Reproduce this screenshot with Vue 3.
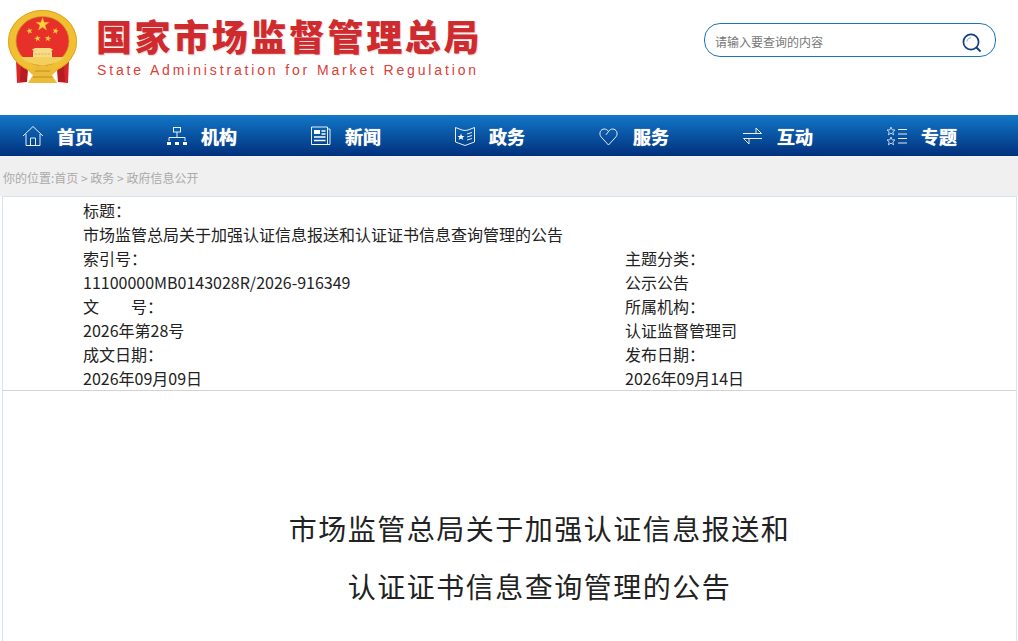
<script setup>
const navItems = [
  { key: 'home', label: '首页' },
  { key: 'org', label: '机构' },
  { key: 'news', label: '新闻' },
  { key: 'gov', label: '政务' },
  { key: 'service', label: '服务' },
  { key: 'interact', label: '互动' },
  { key: 'topic', label: '专题' },
]
const meta = [
  { label: '索引号：', value: '11100000MB0143028R/2026-916349', label2: '主题分类：', value2: '公示公告' },
  { label: '文　　号：', value: '2026年第28号', label2: '所属机构：', value2: '认证监督管理司' },
  { label: '成文日期：', value: '2026年09月09日', label2: '发布日期：', value2: '2026年09月14日' },
]
const starPath = '0,-1 0.235,-0.324 0.951,-0.309 0.38,0.124 0.588,0.809 0,0.4 -0.588,0.809 -0.38,0.124 -0.951,-0.309 -0.235,-0.324'
const smallStars = [
  { x: 21.5, y: 21, r: -15 },
  { x: 47.5, y: 21, r: 15 },
  { x: 29.5, y: 28.5, r: -8 },
  { x: 40, y: 28.5, r: 8 },
]
</script>

<template>
  <div class="page">
    <header class="top">
      <div class="brand">
        <svg class="emblem" width="70" height="74" viewBox="0 0 70 74">
          <path d="M8 50 L19 60 L19 72 L9 73 Z M61 50 L50 60 L50 72 L60 73 Z" fill="#d8262a" />
          <path d="M13 56 L20 60 L19 72 L12 72 Z M56 56 L49 60 L50 72 L57 72 Z" fill="#b81c22" />
          <ellipse cx="34.5" cy="31.5" rx="34.5" ry="31.5" fill="#f1c032" />
          <ellipse cx="34.5" cy="31.5" rx="34" ry="31" fill="none" stroke="#dfa326" stroke-width="1" />
          <ellipse cx="34.5" cy="31" rx="26.5" ry="24.5" fill="#e8302a" stroke="#c9962a" stroke-width="0.8" />
          <path d="M12 47 H57 Q50 54 34.5 55.5 Q19 54 12 47 Z" fill="#f4cf5e" />
          <path d="M24 39.5 L27 38 H42 L45 39.5 L43 41.5 H44 V47 H25 V41.5 H26 Z" fill="#f6dc86" />
          <path d="M27 44 H42" stroke="#e3a94a" stroke-width="1.2" stroke-dasharray="2 1.2" />
          <polygon :points="starPath" transform="translate(34.5 14.5) scale(7)" fill="#f8d23c" stroke="#d9941c" stroke-width="0.05" />
          <polygon v-for="s in smallStars" :key="s.x" :points="starPath" :transform="`translate(${s.x} ${s.y}) rotate(${s.r}) scale(3.4)`" fill="#f8cf3c" />
          <path d="M27 57 Q34.5 53 42 57 L50 60 L44 65 L49 73 H20 L25 65 L19 60 Z" fill="#ecbb38" />
          <path d="M27 61 H42 M25 67 H44" stroke="#c7801c" stroke-width="0.8" />
        </svg>
        <div class="brand-text">
          <div class="brand-cn">国家市场监督管理总局</div>
          <div class="brand-en">State Administration for Market Regulation</div>
        </div>
      </div>
      <div class="search">
        <span class="placeholder">请输入要查询的内容</span>
        <svg width="20" height="20" viewBox="0 0 20 20" fill="none" stroke="#123f80">
          <circle cx="9" cy="9" r="7.6" stroke-width="1.7" />
          <path d="M14.5 14.5 L18.6 18.6" stroke-width="2" />
          <path d="M4.8 8.6 A4.5 4.5 0 0 1 9 4.6" stroke="#8fb2d8" stroke-width="1" />
        </svg>
      </div>
    </header>

    <nav class="nav">
      <a v-for="item in navItems" :key="item.key" class="nav-item">
        <svg class="nav-icon" width="22" height="22" viewBox="0 0 22 22" fill="none" stroke="#fff" stroke-width="0.9">
          <template v-if="item.key === 'home'">
            <path d="M1 11 L11 1.5 L21 11" />
            <path d="M4 9 V20.5 H18 V9" />
            <path d="M8.5 20.5 V13 H13.5 V20.5" />
          </template>
          <template v-else-if="item.key === 'org'">
            <rect x="7.5" y="2.5" width="7" height="4.5" />
            <path d="M11 7 V12 M3 16 V12.5 H19 V16" />
            <rect x="1" y="17" width="4" height="3" fill="#fff" stroke="none" />
            <rect x="9" y="17" width="4" height="3" fill="#fff" stroke="none" />
            <rect x="17" y="17" width="4" height="3" fill="#fff" stroke="none" />
          </template>
          <template v-else-if="item.key === 'news'">
            <path d="M1.5 2 H17.5 V19.5 H1.5 Z" />
            <path d="M17.5 4 H20 V19.5 H2" />
            <rect x="4" y="5" width="6" height="4" fill="#fff" stroke="none" />
            <path d="M11.5 6 H15.5 M11.5 9 H15.5 M4 12 H15.5 M4 15.5 H15.5" stroke-width="1.4" />
          </template>
          <template v-else-if="item.key === 'gov'">
            <path d="M1.5 2.5 L8 5 Q11 6 14 5 L20.5 2.5 V17 L11 20.5 L1.5 17 Z" />
            <path d="M13 9 L18 7.5 M13 12 L18 10.5 M13 15 L18 13.5" />
            <polygon points="7,8.5 8,11 10.5,11 8.5,12.6 9.3,15 7,13.5 4.7,15 5.5,12.6 3.5,11 6,11" fill="#fff" stroke="none" />
          </template>
          <template v-else-if="item.key === 'service'">
            <path d="M10.5 20 L3 11.8 C0.5 8.5 2.6 4 6.3 4 C8 4 9.6 5 10.5 6.5 L8 9.8 M10.5 6.5 C11.4 5 13 4 14.7 4 C18.4 4 20.5 8.5 18 11.8 L10.5 20" />
          </template>
          <template v-else-if="item.key === 'interact'">
            <path d="M1 8.5 H19.5 L14 3 V8.5" />
            <path d="M20 13.5 H1.5 L7 19 V13.5" />
          </template>
          <template v-else>
            <polygon points="5,2 6.1,4.8 9,5 6.8,6.9 7.6,9.8 5,8.2 2.4,9.8 3.2,6.9 1,5 3.9,4.8" stroke="#cfe0f2" />
            <polygon points="5,12 6.1,14.8 9,15 6.8,16.9 7.6,19.8 5,18.2 2.4,19.8 3.2,16.9 1,15 3.9,14.8" stroke="#cfe0f2" />
            <path d="M12 4.5 H21 M12 9 H21 M12 13.5 H21 M12 18 H21" />
          </template>
        </svg>
        <span>{{ item.label }}</span>
      </a>
    </nav>

    <div class="crumb">你的位置:首页 &gt; 政务 &gt; 政府信息公开</div>

    <main class="box">
      <section class="meta">
        <div class="cell wide">
          <div>标题：</div>
          <div>市场监管总局关于加强认证信息报送和认证证书信息查询管理的公告</div>
        </div>
        <template v-for="row in meta" :key="row.label">
          <div class="cell">
            <div>{{ row.label }}</div>
            <div>{{ row.value }}</div>
          </div>
          <div class="cell">
            <div>{{ row.label2 }}</div>
            <div>{{ row.value2 }}</div>
          </div>
        </template>
      </section>
      <h1 class="title">
        <div>市场监管总局关于加强认证信息报送和</div>
        <div>认证证书信息查询管理的公告</div>
      </h1>
    </main>
  </div>
</template>

<style scoped>
.page {
  height: 641px;
  overflow: hidden;
  background: #fff;
  font-family: "Noto Sans CJK SC", "Noto Sans", sans-serif;
  color: #222;
}
.top {
  height: 115px;
  display: flex;
  justify-content: space-between;
  align-items: flex-start;
  padding: 0 22px 0 8px;
  box-sizing: border-box;
}
.brand {
  display: flex;
  padding-top: 10px;
}
.emblem {
  flex: none;
}
.brand-text {
  margin-left: 18px;
  padding-top: 2px;
}
.brand-cn {
  font-size: 36px;
  line-height: 46px;
  font-weight: 900;
  letter-spacing: 2.6px;
  color: #cf2a2e;
  text-shadow: 1px 1px 1px rgba(200, 120, 120, 0.35);
  white-space: nowrap;
}
.brand-en {
  font-family: "Liberation Sans", sans-serif;
  font-size: 14px;
  line-height: 18px;
  margin-top: 3px;
  padding-left: 1px;
  letter-spacing: 2.85px;
  color: #d9403a;
  white-space: nowrap;
}
.search {
  width: 292px;
  height: 34px;
  margin-top: 23px;
  box-sizing: border-box;
  border: 1px solid #1b74bf;
  border-radius: 16px;
  display: flex;
  align-items: center;
  justify-content: space-between;
  padding: 2px 13px 0 10px;
}
.placeholder {
  font-size: 12px;
  color: #777;
}
.search svg {
  margin-top: 4px;
}
.nav {
  height: 41px;
  display: flex;
  padding-left: 22px;
  background: linear-gradient(#1277c8, #00307c);
}
.nav-item {
  width: 144px;
  flex: none;
  display: flex;
  align-items: center;
  color: #fff;
  font-size: 18px;
  font-weight: 700;
  text-shadow: 0 0 1px #fff;
}
.nav-item span {
  padding-top: 1px;
}
.nav-icon {
  margin-right: 13px;
  flex: none;
}
.crumb {
  height: 40px;
  background: #f0f0f0;
  font-size: 12px;
  line-height: 44px;
  color: #aaa;
  padding-left: 3px;
}
.box {
  margin: 0 1px 0 2px;
  border: 1px solid #d8e2f2;
  border-bottom: 0;
  height: 445px;
  background: #fff;
}
.meta {
  height: 192px;
  padding: 1px 0 0 80px;
  border-bottom: 1px solid #d3d3d3;
  display: grid;
  grid-template-columns: 542px 1fr;
  align-content: start;
  font-size: 16px;
  line-height: 24px;
  color: #222;
}
.wide {
  grid-column: 1 / -1;
}
.title {
  margin: 0;
  padding: 108px 0 0 60px;
  text-align: center;
  font-family: "Noto Sans CJK SC", sans-serif;
  font-size: 28px;
  line-height: 58px;
  font-weight: 400;
  letter-spacing: 1.5px;
  color: #222;
}
</style>
